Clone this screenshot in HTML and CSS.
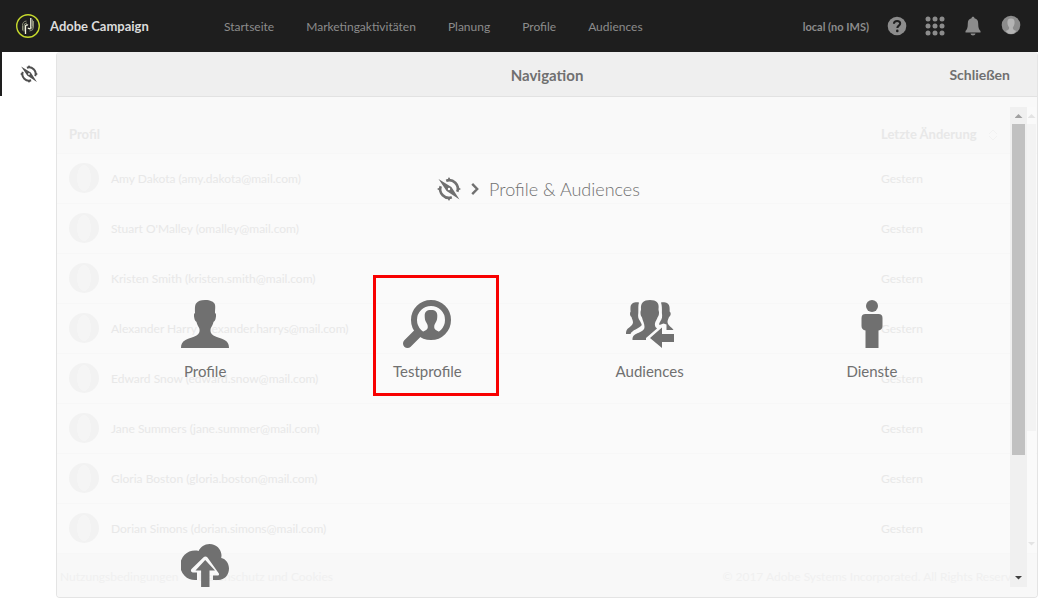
FILE: index.html
```html
<!DOCTYPE html>
<html lang="de">
<head>
<meta charset="utf-8">
<title>Adobe Campaign</title>
<link rel="stylesheet" href="styles.css">
</head>
<body>
<svg class="defs" aria-hidden="true">
  <symbol id="compass" viewBox="0 0 24 24">
    <path d="M9.200 3.700A8.700 8.700 0 0 1 20.300 14.800M14.800 20.300A8.700 8.700 0 0 1 3.700 9.200" fill="none" stroke="currentColor" stroke-width="2.600"/>
    <path d="M10.200 3 12 0l1.800 3zM21 10.200 24 12l-3 1.800zM10.200 21h3.600L12 24zM3 10.200v3.600L0 12z" fill="currentColor"/>
    <path fill-rule="evenodd" d="M1.500 2 14.400 9.900 22.500 22.500 9.600 14.100zM12 10.800a1.200 1.200 0 1 0 0 2.400 1.200 1.200 0 0 0 0-2.400z" fill="currentColor"/>
  </symbol>
  <symbol id="bust" viewBox="0 0 48 48">
    <path d="M24 0c6 0 8 2 9 3 2 2 1 6 1 10 1 0 1.500 2 .5 6-.5 2-1.500 2.500-2 3-.5 3-2.500 5-3 7-.5 3 .5 5 3 6.500 3 1.800 8 2.500 11 4.500 3.500 2 4.500 4.500 4.500 8H0c0-3.500 1-6 4.500-8 3-2 8-2.700 11-4.500 2.500-1.500 3.500-3.500 3-6.500-.5-2-2.500-4-3-7-.5-.5-1.500-1-2-3-1-4-.5-6 .5-6 0-4-.5-8 1.500-10 1.500-1.800 4-3 8.500-3z" fill="currentColor"/>
  </symbol>
</svg>

<header class="topbar">
  <a class="brand" href="#">
    <svg class="brand-logo" viewBox="0 0 24 24" aria-hidden="true">
      <circle cx="12" cy="12" r="11.300" fill="none" stroke="#c6d92d" stroke-width="1.400"/>
      <g fill="none" stroke-width="1">
        <path d="M6.500 16.500v-5a4.500 4.500 0 0 1 4-4.500M8 17.500v-5.500a3 3 0 0 1 3-3M17.500 7v6a4 4 0 0 1-4 4M16.500 5.500v7a3 3 0 0 1-3 3" stroke="#8b8f76"/>
        <path d="M9.500 20v-7.500a1.500 1.500 0 0 1 2.500-1.200M14.800 4v8.500a1.500 1.500 0 0 1-2.800 1.200" stroke="#f4f5df" stroke-width="1.300"/>
      </g>
    </svg>
    <span>Adobe Campaign</span>
  </a>
  <nav class="menu">
    <a href="#">Startseite</a>
    <a href="#">Marketingaktivitäten</a>
    <a href="#">Planung</a>
    <a href="#">Profile</a>
    <a href="#">Audiences</a>
  </nav>
  <div class="tools">
    <span class="org">local (no IMS)</span>
    <button class="tool" aria-label="Hilfe">
      <svg viewBox="0 0 20 20"><circle cx="10" cy="10" r="9.300" fill="currentColor"/><path d="M6.900 7.700C7 5.800 8.300 4.900 10.100 4.900c1.900 0 3.100 1 3.100 2.600 0 2.100-2.900 2.200-2.900 4.600" fill="none" stroke="#1e1e1e" stroke-width="2"/><circle cx="10.300" cy="14.900" r="1.300" fill="#1e1e1e"/></svg>
    </button>
    <button class="tool" aria-label="Lösungen">
      <svg viewBox="0 0 20 20" fill="currentColor"><circle cx="3" cy="3" r="2.500"/><circle cx="10" cy="3" r="2.500"/><circle cx="17" cy="3" r="2.500"/><circle cx="3" cy="10" r="2.500"/><circle cx="10" cy="10" r="2.500"/><circle cx="17" cy="10" r="2.500"/><circle cx="3" cy="17" r="2.500"/><circle cx="10" cy="17" r="2.500"/><circle cx="17" cy="17" r="2.500"/></svg>
    </button>
    <button class="tool" aria-label="Benachrichtigungen">
      <svg viewBox="0 0 20 20" fill="currentColor"><path d="M10 .8c.9 0 1.500.6 1.500 1.500 2.600.7 3.700 2.500 3.700 5.200 0 4.300.7 6 2.300 7.500v1.500h-15V15c1.600-1.500 2.300-3.200 2.300-7.500 0-2.700 1.100-4.500 3.700-5.200C8.500 1.400 9.100.8 10 .8zM7.500 17.600h5c-.2 1.300-1.200 2-2.500 2s-2.300-.7-2.500-2z"/></svg>
    </button>
    <button class="tool tool-user" aria-label="Benutzerkonto">
      <svg viewBox="0 0 20 20"><circle cx="10" cy="10" r="9.300" fill="#8c8c8c"/><path d="M10 3.500c2.600 0 3.800 1.500 3.600 4.200-.1 2-.9 3.500-1.700 4.600-.3 2 .6 2.700 3.300 3.600C13.900 17.700 12 19 10 19s-3.900-1.300-5.200-3.100c2.700-.9 3.600-1.600 3.300-3.600-.8-1.100-1.600-2.600-1.700-4.600-.2-2.700 1-4.200 3.600-4.200z" fill="#b4b4b4"/></svg>
    </button>
  </div>
</header>

<div class="workspace">
  <aside class="rail">
    <button class="rail-tab" aria-label="Navigation"><svg><use href="#compass"/></svg></button>
  </aside>

  <main class="panel">
    <div class="panel-head">
      <h1>Navigation</h1>
      <button class="close">Schließen</button>
    </div>

    <div class="stage">
      <div class="list">
        <table class="profiles">
          <thead><tr><th>Profil</th><th class="col-date">Letzte Änderung <svg class="sort" viewBox="0 0 10 12"><path d="M1 5l4-4 4 4M1 7l4 4 4-4" fill="none" stroke="currentColor"/></svg></th></tr></thead>
          <tbody>
            <tr><td><div class="person"><span class="avatar"></span>Amy Dakota (amy.dakota@mail.com)</div></td><td>Gestern</td></tr>
            <tr><td><div class="person"><span class="avatar"></span>Stuart O'Malley (omalley@mail.com)</div></td><td>Gestern</td></tr>
            <tr><td><div class="person"><span class="avatar"></span>Kristen Smith (kristen.smith@mail.com)</div></td><td>Gestern</td></tr>
            <tr><td><div class="person"><span class="avatar"></span>Alexander Harry (alexander.harrys@mail.com)</div></td><td>Gestern</td></tr>
            <tr><td><div class="person"><span class="avatar"></span>Edward Snow (edward.snow@mail.com)</div></td><td>Gestern</td></tr>
            <tr><td><div class="person"><span class="avatar"></span>Jane Summers (jane.summer@mail.com)</div></td><td>Gestern</td></tr>
            <tr><td><div class="person"><span class="avatar"></span>Gloria Boston (gloria.boston@mail.com)</div></td><td>Gestern</td></tr>
            <tr><td><div class="person"><span class="avatar"></span>Dorian Simons (dorian.simons@mail.com)</div></td><td>Gestern</td></tr>
          </tbody>
        </table>
        <div class="scroll scroll-faint" aria-hidden="true"><i class="up"></i><i class="thumb"></i><i class="down"></i></div>
        <footer class="legal">
          <a href="#">Nutzungsbedingungen</a>
          <a href="#">Datenschutz und Cookies</a>
          <span class="copyright">© 2017 Adobe Systems Incorporated. All Rights Reserved.</span>
        </footer>
      </div>

      <div class="overlay">
        <div class="overlay-body">
          <h2 class="crumbs">
            <svg class="crumb-icon"><use href="#compass"/></svg>
            <svg class="chevron" viewBox="0 0 8 14"><path d="M1.200 1.800 6.200 7l-5 5.200" fill="none" stroke="currentColor" stroke-width="2.400"/></svg>
            <span>Profile &amp; Audiences</span>
          </h2>
          <div class="tiles">
            <a class="tile" href="#"><svg class="tile-icon"><use href="#bust"/></svg><span>Profile</span></a>
            <a class="tile" href="#">
              <svg class="tile-icon" viewBox="0 0 48 48">
                <circle cx="28" cy="20" r="17" fill="none" stroke="currentColor" stroke-width="6"/>
                <path d="M14.500 33.500 4.500 43.500" stroke="currentColor" stroke-width="9" stroke-linecap="round"/>
                <path d="M28 10c4.500 0 6.300 2 6.300 5.500 0 3-.3 5-1.600 7-.8 1.300-1.500 2.400-1.500 4.500 0 3 2.800 3.500 5.300 5L33 36H23l-3.500-4c2.500-1.500 5.300-2 5.300-5 0-2.100-.7-3.200-1.500-4.500-1.300-2-1.600-4-1.600-7C21.700 12 23.500 10 28 10z" fill="currentColor"/>
              </svg>
              <span>Testprofile</span>
              <span class="marker"></span>
            </a>
            <a class="tile" href="#">
              <svg class="tile-icon" viewBox="0 0 48 48" fill="currentColor">
                <path d="M13 2.500C9 1.800 5 3 4.500 7c-.2 1.500 0 3 .1 4.500-1 1.500-.8 4.500.9 5.500.5 2.500 1.500 3 1.500 5.500 0 3-5.500 5.500-6.500 8C0 31.700 0 33 0 34h4.500c1.500-4 8.500-5.500 11-8.500.8-1-.5-2.500-1.500-4.500-1.800-2-2.200-5-1.700-8C12.500 9 12 5 13 2.500zM35 2.500c4-.7 8 .5 8.500 4.500.2 1.500.2 3 .1 4.500 1.700 1 1.400 4.500-.6 5.500-.5 2-1.500 3-1.500 5 0 3 4.500 5.500 6 8h-7v-5.500l-3-1-4 1.500c-1-1.500.5-2.500 1-4 1.700-2 1.900-5 1.400-8C36 9 36 5 35 2.500z"/>
                <path d="M24 0c6.500 0 9.500 3 8.500 9-.1 1.500.5 2 .5 3.500 0 2-.3 3.500-1.500 5-1 3-3 4.500-2.500 8 .2 1.500 1 2 2 3L20 38v2H6.500c0-3 .5-4.500 3.500-6 3.500-1.700 8.500-3 8.500-7 0-3.500-1.700-6-2.500-9.500-1.200-1.500-1.500-3-1.500-5 0-1.500.6-2 .5-3.500C14.500 3 17.500 0 24 0z"/>
                <path d="M24 38 36 27.500V34h12v8H36v6z"/>
              </svg>
              <span>Audiences</span>
            </a>
            <a class="tile" href="#">
              <svg class="tile-icon" viewBox="0 0 48 48" fill="currentColor"><circle cx="24" cy="6" r="6"/><path d="M17.500 14h13a4 4 0 0 1 4 4v8c0 2.500-1.500 4-4 4.500V48h-13V30.500c-2.500-.5-4-2-4-4.500v-8a4 4 0 0 1 4-4z"/></svg>
              <span>Dienste</span>
            </a>
            <a class="tile" href="#" aria-label="Import">
              <svg class="tile-icon" viewBox="0 0 48 48" fill="currentColor"><path d="M16 36h-2A14.500 14.500 0 0 1 14 6.500c1.500 0 2.600.1 3.600.5C19.500 3 23.500 0 28.500 0 35.500 0 40 5 40.500 11c0 1.200-.1 2-.3 3C45 15 48 19.500 48 24.500 48 31 43.500 36 37.500 36H32v-4.500h4.500c1.500 0 2-1.500 1-2.600L26.500 13.500c-1.200-1.200-3-1.200-4.200 0L10.500 25c-1.200 1.500-.5 3.500 1.400 3.500H16z"/><path d="M24.200 16 34 26.500h-5.500V44h-8.400V26.500h-5.600z"/></svg>
            </a>
          </div>
        </div>
        <div class="scroll" aria-hidden="true"><i class="up"></i><i class="thumb"></i><i class="down"></i></div>
      </div>
    </div>
  </main>
</div>
</body>
</html>
```

FILE: styles.css
```css
* { box-sizing: border-box; }

body {
  margin: 0;
  padding-right: 3px;
  background: #fff;
  color: #707070;
  font-family: Lato, "Open Sans", sans-serif;
  font-size: 12px;
}

a { color: inherit; text-decoration: none; }

button {
  padding: 0;
  border: 0;
  background: none;
  color: inherit;
  font: inherit;
  cursor: pointer;
}

.defs { display: none; }

/* Top bar */
.topbar {
  display: flex;
  align-items: center;
  height: 52px;
  padding: 0 17px 0 16px;
  background: #1e1e1e;
  color: #8c8c8c;
}

.brand {
  display: flex;
  align-items: center;
  gap: 10px;
  flex: 0 0 208px;
  color: #dcdcdc;
  font-size: 13px;
  font-weight: 700;
}

.brand-logo { width: 24px; height: 24px; }

.menu { display: flex; gap: 32px; }

.tools {
  display: flex;
  align-items: center;
  gap: 18px;
  margin-left: auto;
}

.org { font-size: 11px; font-weight: 700; }

.tool { display: block; width: 20px; height: 20px; }
.tool svg { display: block; width: 20px; height: 20px; }
.tool-user { margin-bottom: 2px; }

/* Workspace */
.workspace { display: flex; }

.rail { flex: 0 0 56px; }

.rail-tab {
  display: flex;
  align-items: center;
  justify-content: center;
  width: 100%;
  height: 44px;
  border-left: 2px solid #1e1e1e;
  color: #505050;
}

.rail-tab svg { width: 18px; height: 18px; }

.panel {
  flex: 1;
  min-width: 0;
  border: 1px solid #e4e4e4;
  border-top-color: #efefef;
  border-radius: 4px;
  overflow: hidden;
  background: #f9f9f9;
}

.panel-head {
  display: grid;
  grid-template-columns: 1fr auto 1fr;
  align-items: center;
  height: 44px;
  padding: 0 27px;
  border-bottom: 1px solid #e2e2e2;
  background: #efefef;
  font-size: 14px;
  font-weight: 700;
}

.panel-head h1 {
  grid-column: 2;
  margin: 0;
  font-size: 15px;
}

.close { justify-self: end; }

.stage { position: relative; }

/* Dimmed list */
.list { position: relative; color: #e8e8e8; }

.profiles {
  width: 100%;
  border-collapse: collapse;
  table-layout: fixed;
  background: #fafafa;
}

.profiles th,
.profiles td {
  height: 50px;
  padding: 0 12px;
  border-bottom: 1px solid #f7f7f7;
  text-align: left;
}

.profiles th {
  height: 56px;
  padding-top: 18px;
  background: #f9f9f9;
  font-size: 13px;
}

.profiles .col-date { width: 168px; }

.sort { width: 10px; height: 12px; margin-left: 8px; vertical-align: middle; color: #f2f2f2; }

.person { display: flex; align-items: center; gap: 12px; }

.avatar {
  width: 30px;
  height: 30px;
  border-radius: 50%;
  background: radial-gradient(ellipse 7px 13px at 50% 50%, #f5f5f5 98%, #f2f2f2);
}

.legal {
  display: flex;
  align-items: center;
  gap: 20px;
  height: 43px;
  padding: 3px 10px 0 3px;
  background: #f8f8f8;
  color: #f0f0f0;
}

.copyright { margin-left: auto; }

/* Overlay navigation */
.overlay {
  position: absolute;
  inset: 10px;
  display: flex;
}

.overlay-body {
  flex: 1;
  padding: 0 27px;
  overflow: hidden;
}

.crumbs {
  display: flex;
  align-items: center;
  justify-content: center;
  gap: 10px;
  height: 24px;
  margin: 70px 0 99px;
  font-size: 18px;
  font-weight: 300;
}

.crumb-icon { width: 24px; height: 24px; }
.chevron { width: 8px; height: 14px; }

.tiles {
  display: grid;
  grid-template-columns: repeat(4, 1fr);
  grid-auto-rows: 84px;
  row-gap: 160px;
}

.tile {
  position: relative;
  display: flex;
  flex-direction: column;
  align-items: center;
  gap: 13px;
  font-size: 15px;
  line-height: 20px;
}

.tile-icon { flex: none; width: 48px; height: 48px; }

.marker {
  position: absolute;
  top: -25px;
  left: calc(50% - 54px);
  width: 126px;
  height: 121px;
  border: 3px solid #f80000;
}

/* Scroll bars */
.scroll {
  display: flex;
  flex-direction: column;
  align-items: center;
  flex: 0 0 17px;
  background: #f0f0f0;
}

.scroll .up,
.scroll .down {
  width: 8px;
  height: 4px;
  margin: 7px 0 6px;
  background: #a0a0a0;
  clip-path: polygon(50% 0, 100% 100%, 0 100%);
}

.scroll .down {
  margin: auto 0 7px;
  background: #404040;
  clip-path: polygon(0 0, 100% 0, 50% 100%);
}

.scroll .thumb {
  width: 13px;
  height: 69%;
  background: #c1c1c1;
}

.scroll-faint {
  position: absolute;
  top: 10px;
  right: 1px;
  bottom: 44px;
  width: 9px;
  background: #fafafa;
}

.scroll-faint .up,
.scroll-faint .down { background: #e4e4e4; }

.scroll-faint .thumb { width: 9px; background: #f3f3f3; }
```
